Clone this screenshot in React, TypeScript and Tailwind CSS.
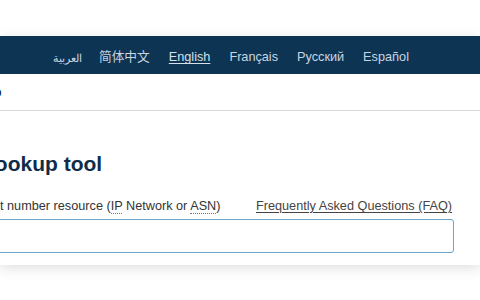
import React from 'react';

const languages = [
  { label: 'العربية', active: false, arabic: true },
  { label: '简体中文', active: false },
  { label: 'English', active: true },
  { label: 'Français', active: false },
  { label: 'Русский', active: false },
  { label: 'Español', active: false },
];

export default function App() {
  return (
    <div className="w-[480px] h-[300px] bg-white overflow-hidden pt-[36px] font-['Liberation_Sans','Noto_Sans_CJK_SC',sans-serif]">
      <div className="bg-white shadow-[0_3px_12px_rgba(0,0,0,0.13)] h-[229px]">
        {/* Language bar */}
        <nav className="h-[38px] bg-[#0d3453] flex items-center pt-[6px] pl-[53px] gap-[19px] text-[12.7px] text-[#c9d6e2]">
          {languages.map((lang) => (
            <a
              key={lang.label}
              className={
                lang.active
                  ? 'underline underline-offset-2 text-[#d5e0ea]'
                  : lang.arabic
                    ? 'text-[11px] w-[27px] whitespace-nowrap'
                    : ''
              }
            >
              {lang.label}
            </a>
          ))}
        </nav>

        {/* Site header strip */}
        <div className="h-[37px] border-b border-[#d9d9d9] flex items-center overflow-hidden">
          <span className="-ml-[7px] text-[14px] font-bold text-[#1a2a3a]">o</span>
        </div>

        {/* Lookup form */}
        <div className="pr-[26px] pt-[40px] overflow-hidden">
          <h1 className="-ml-[18px] text-[21px] leading-[26px] font-bold text-[#0f2d4a]">Lookup tool</h1>
          <div className="mt-[21px] flex items-end justify-between text-[12.7px] leading-[16px]">
            <label className="-ml-[39.5px] text-[#333] whitespace-nowrap">
              Internet number resource (
              <abbr className="no-underline border-b border-dotted border-[#777]" title="Internet Protocol">IP</abbr> Network or{' '}
              <abbr className="no-underline border-b border-dotted border-[#777]" title="Autonomous System Number">ASN</abbr>)
            </label>
            <a className="underline underline-offset-2 text-[#444] mr-[2px] whitespace-nowrap">Frequently Asked Questions (FAQ)</a>
          </div>
          <input
            type="text"
            className="mt-[5px] -ml-[10px] w-[calc(100%+10px)] h-[34px] border border-[#6aa6cc] rounded-[3px] outline-none"
          />
        </div>
      </div>
    </div>
  );
}
